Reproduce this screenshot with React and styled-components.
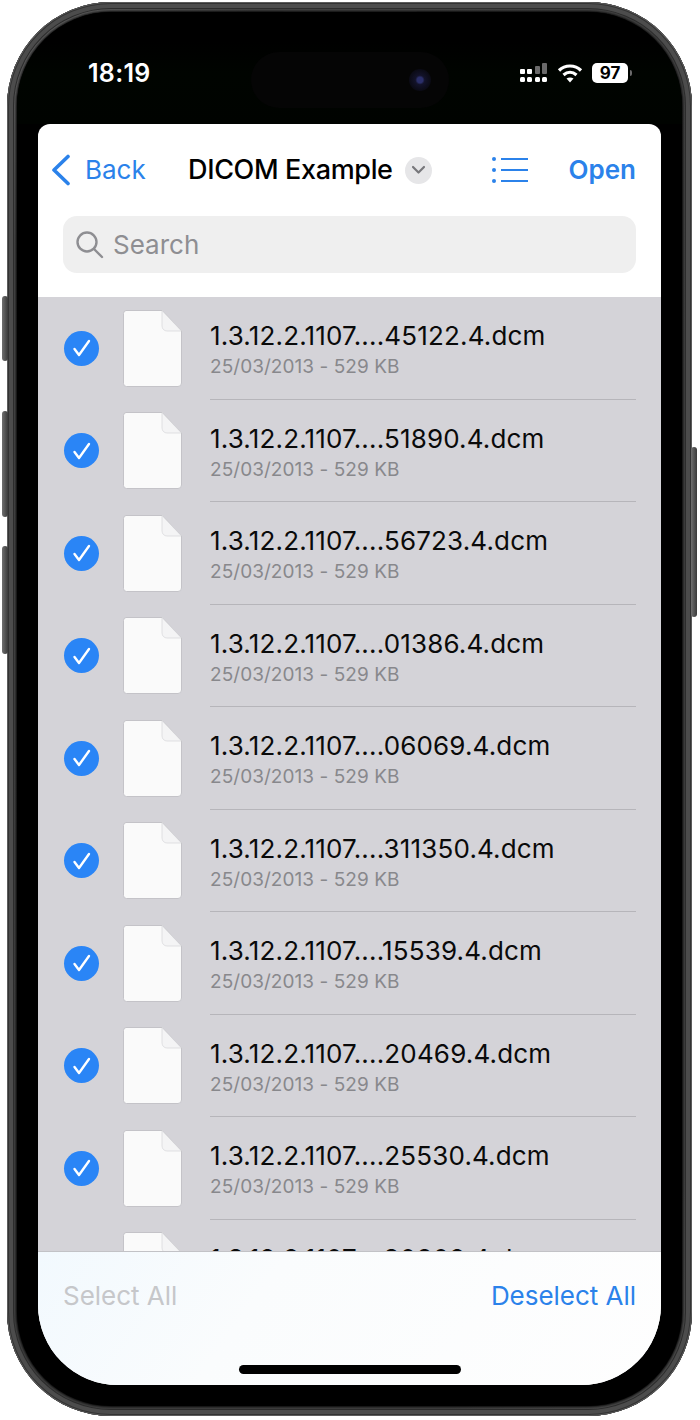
import React from "react";
import styled, { createGlobalStyle } from "styled-components";

const Global = createGlobalStyle`
  html, body { margin: 0; padding: 0; background: #fff; }
  body { width: 700px; height: 1420px; overflow: hidden; font-family: Inter, "Liberation Sans", sans-serif; }
  * { box-sizing: border-box; }
`;

const Stage = styled.div`
  width: 700px;
  height: 1420px;
  padding: 2px 8px 4px 7px;
`;

const Frame = styled.div`
  position: relative;
  width: 685px;
  height: 1414px;
  border-radius: 104px;
  padding: 10px;
  background: linear-gradient(135deg, #6a6a6a 0%, #4a4a4a 12%, #454545 50%, #454545 88%, #555 100%);
  box-shadow: inset 0 0 0 1px #5c5c5c, inset 0 0 0 2px #333, inset 0 0 0 6px #4c4c4c, inset 0 0 0 7px #2e2e2e;
`;

const SpeakerGroove = styled.div`
  position: absolute;
  left: 276px;
  top: 9px;
  width: 134px;
  height: 4px;
  border-radius: 0 0 4px 4px;
  background: #1c1c1c;
`;

const SideButton = styled.div`
  position: absolute;
  top: ${(p) => p.$top}px;
  height: ${(p) => p.$h}px;
  width: 6px;
  ${(p) => (p.$right ? "right: -5px;" : "left: -5px;")}
  border-radius: 3px;
  background: linear-gradient(90deg, #707070, #3a3a3a);
`;

const Bezel = styled.div`
  width: 100%;
  height: 100%;
  border-radius: 94px;
  background: #000;
  padding: 0 21px 21px;
  display: flex;
  flex-direction: column;
  box-shadow: 0 0 3px 1px #000;
`;

const StatusBar = styled.div`
  position: relative;
  height: 112px;
  flex: none;
  background: linear-gradient(180deg, #000 0 26%, #000400 55%, #000300 100%);
  margin: 0 -21px;
  border-radius: 94px 94px 0 0;
  display: flex;
  align-items: flex-start;
  justify-content: space-between;
  padding: 45px 50px 0 71px;
  color: #fff;
`;

const Time = styled.span`
  font-size: 25px;
  font-weight: 600;
  line-height: 32px;
  letter-spacing: 0.3px;
`;

const Island = styled.div`
  position: absolute;
  left: 234px;
  top: 40px;
  width: 198px;
  height: 56px;
  border-radius: 28px;
  background: #050505;
`;

const Camera = styled.div`
  position: absolute;
  right: 18px;
  top: 17px;
  width: 22px;
  height: 22px;
  border-radius: 50%;
  background: radial-gradient(circle, #2b2f6a 0 18%, #13132a 30%, #0a0a14 70%, #060606 100%);
`;

const StatusIcons = styled.div`
  display: flex;
  align-items: center;
  gap: 9px;
  height: 32px;
`;

const Battery = styled.div`
  display: flex;
  align-items: center;
  gap: 2px;
`;

const BatteryBody = styled.div`
  width: 36px;
  height: 20px;
  border-radius: 5px;
  background: #fff;
  color: #000;
  font-size: 17px;
  font-weight: 700;
  line-height: 20px;
  text-align: center;
`;

const BatteryCap = styled.div`
  width: 2px;
  height: 6px;
  border-radius: 0 2px 2px 0;
  background: #6a6a6a;
`;

const Screen = styled.div`
  flex: 1;
  min-height: 0;
  background: #fff;
  border-radius: 12px 12px 80px 80px;
  overflow: hidden;
  display: flex;
  flex-direction: column;
`;

const Header = styled.header`
  flex: none;
  height: 173px;
  padding: 0 25px;
`;

const NavBar = styled.div`
  height: 92px;
  display: flex;
  align-items: center;
`;

const BackButton = styled.div`
  display: flex;
  align-items: center;
  gap: 14px;
  margin-left: -12px;
  color: #2b82ea;
  font-size: 26px;
  line-height: 32px;
  width: 137px;
`;

const Title = styled.div`
  font-size: 27px;
  font-weight: 500;
  color: #000;
  line-height: 32px;
  letter-spacing: -0.35px;
  white-space: nowrap;
`;

const ChevronBadge = styled.div`
  width: 27px;
  height: 27px;
  margin-left: 12px;
  border-radius: 50%;
  background: #e6e6e8;
  display: flex;
  align-items: center;
  justify-content: center;
`;

const ListIcon = styled.svg`
  margin-left: 60px;
  flex: none;
`;

const OpenButton = styled.div`
  margin-left: auto;
  font-size: 26px;
  font-weight: 600;
  color: #2b82ea;
  line-height: 32px;
`;

const SearchField = styled.div`
  height: 57px;
  border-radius: 14px;
  background: #efefef;
  display: flex;
  align-items: center;
  padding-left: 12px;
  gap: 9px;
  font-size: 26px;
  color: #8e8e92;
`;

const List = styled.div`
  flex: 1;
  min-height: 0;
  overflow: hidden;
  background: #d4d3d8;
`;

const Row = styled.div`
  height: 102.5px;
  display: grid;
  grid-template-columns: 35px 59px 1fr;
  column-gap: 24px;
  align-items: center;
  padding-left: 26px;
  padding-right: 25px;
`;

const Check = styled.div`
  width: 35px;
  height: 35px;
  border-radius: 50%;
  background: #2a85f6;
  display: flex;
  align-items: center;
  justify-content: center;
`;

const RowText = styled.div`
  height: 102.5px;
  margin-left: 4px;
  padding-top: 23px;
  border-bottom: 1px solid #b6b5ba;
`;

const FileName = styled.div`
  font-size: 26px;
  line-height: 32px;
  color: #0a0a0a;
  letter-spacing: 0.16px;
  white-space: nowrap;
`;

const FileMeta = styled.div`
  margin-top: 3px;
  font-size: 19px;
  line-height: 24px;
  color: #88888c;
  letter-spacing: 0.05px;
`;

const Toolbar = styled.footer`
  position: relative;
  flex: none;
  height: 134px;
  border-top: 1px solid #c2c2c6;
  background: linear-gradient(125deg, #f2f9fe 0%, #fafcfd 35%, #fefefe 100%);
  display: flex;
  justify-content: space-between;
  padding: 26px 25px 0;
  font-size: 26px;
  line-height: 36px;
  letter-spacing: -0.03px;
  z-index: 1;
`;

const ToolAction = styled.span`
  color: ${(p) => (p.$disabled ? "#c6c7ca" : "#2b82ea")};
`;

const HomeBar = styled.div`
  position: absolute;
  left: 201px;
  bottom: 11px;
  width: 222px;
  height: 9px;
  border-radius: 5px;
  background: #000;
`;

const FileIcon = () => (
  <svg width="59" height="77" viewBox="0 0 59 77">
    <path d="M3 .5H39L58.500 21V73a3.500 3.500 0 0 1-3.500 3.500H3.500A3 3 0 0 1 .5 73.500V3.500a3 3 0 0 1 2.500-3Z" fill="#fafafa" stroke="#c4c3c8" />
    <path d="M39 .5V16a5 5 0 0 0 5 5H58.500Z" fill="#f4f4f5" stroke="#d0d0d3" strokeWidth=".6" />
  </svg>
);

const files = ["45122", "51890", "56723", "01386", "06069", "311350", "15539", "20469", "25530", "30802"];

export default function App() {
  return (
    <Stage>
      <Global />
      <Frame>
        <SpeakerGroove />
        <SideButton $top={294} $h={65} />
        <SideButton $top={409} $h={106} />
        <SideButton $top={544} $h={108} />
        <SideButton $right $top={445} $h={170} />
        <Bezel>
          <StatusBar>
            <Time>18:19</Time>
            <Island><Camera /></Island>
            <StatusIcons>
              <svg width="28" height="20" viewBox="0 0 28 20" fill="#fff">
                <rect x="0" y="6" width="5" height="5" rx="1" />
                <rect x="7" y="6" width="5" height="5" rx="1" />
                <rect x="15" y="3" width="5" height="8" rx="1" fill="#6a6a6a" />
                <rect x="22" y="0" width="5" height="11" rx="1" fill="#6a6a6a" />
                <rect x="0" y="14" width="5" height="5" rx="1.500" />
                <rect x="7" y="14" width="5" height="5" rx="1.500" />
                <rect x="15" y="14" width="5" height="5" rx="1.500" />
                <rect x="22" y="14" width="5" height="5" rx="1.500" />
              </svg>
              <svg width="26" height="20" viewBox="0 0 26 20" fill="none" stroke="#fff" strokeWidth="3.200">
                <path d="M2 7.500C8 1.500 18 1.500 24 7.500" />
                <path d="M6.500 12C10.500 8.500 15.500 8.500 19.500 12" />
                <path d="M13 19.500L9.500 15.500C11.500 14 14.500 14 16.500 15.500Z" fill="#fff" stroke="none" />
              </svg>
              <Battery>
                <BatteryBody>97</BatteryBody>
                <BatteryCap />
              </Battery>
            </StatusIcons>
          </StatusBar>
          <Screen>
            <Header>
              <NavBar>
                <BackButton>
                  <svg width="20" height="32" viewBox="0 0 20 32" fill="none" stroke="#2b82ea" strokeWidth="3.600" strokeLinecap="round" strokeLinejoin="round">
                    <path d="M17 2.500L3 16L17 29.500" />
                  </svg>
                  Back
                </BackButton>
                <Title>DICOM Example</Title>
                <ChevronBadge>
                  <svg width="15" height="10" viewBox="0 0 15 10" fill="none" stroke="#77777b" strokeWidth="2.200" strokeLinecap="round" strokeLinejoin="round">
                    <path d="M2 2l5.500 5.500L13 2" />
                  </svg>
                </ChevronBadge>
                <ListIcon width="36" height="26" viewBox="0 0 36 26" fill="none" stroke="#2b82ea" strokeWidth="2.200">
                  <path d="M9 2H36M9 13H36M9 24H36" />
                  <g fill="#2b82ea" stroke="none">
                    <circle cx="2" cy="2" r="2" />
                    <circle cx="2" cy="13" r="2" />
                    <circle cx="2" cy="24" r="2" />
                  </g>
                </ListIcon>
                <OpenButton>Open</OpenButton>
              </NavBar>
              <SearchField>
                <svg width="29" height="29" viewBox="0 0 29 29" fill="none" stroke="#8e8e92" strokeWidth="2.400" strokeLinecap="round">
                  <circle cx="12" cy="12" r="9.500" />
                  <path d="M19 19l8 8" />
                </svg>
                Search
              </SearchField>
            </Header>
            <List>
              {files.map((id) => (
                <Row key={id}>
                  <Check>
                    <svg width="20" height="18" viewBox="0 0 20 18" fill="none" stroke="#fff" strokeWidth="2.400" strokeLinecap="round" strokeLinejoin="round">
                      <path d="M2.500 10l4.500 6L17 2" />
                    </svg>
                  </Check>
                  <FileIcon />
                  <RowText>
                    <FileName>1.3.12.2.1107....{id}.4.dcm</FileName>
                    <FileMeta>25/03/2013 - 529 KB</FileMeta>
                  </RowText>
                </Row>
              ))}
            </List>
            <Toolbar>
              <ToolAction $disabled>Select All</ToolAction>
              <ToolAction>Deselect All</ToolAction>
              <HomeBar />
            </Toolbar>
          </Screen>
        </Bezel>
      </Frame>
    </Stage>
  );
}
